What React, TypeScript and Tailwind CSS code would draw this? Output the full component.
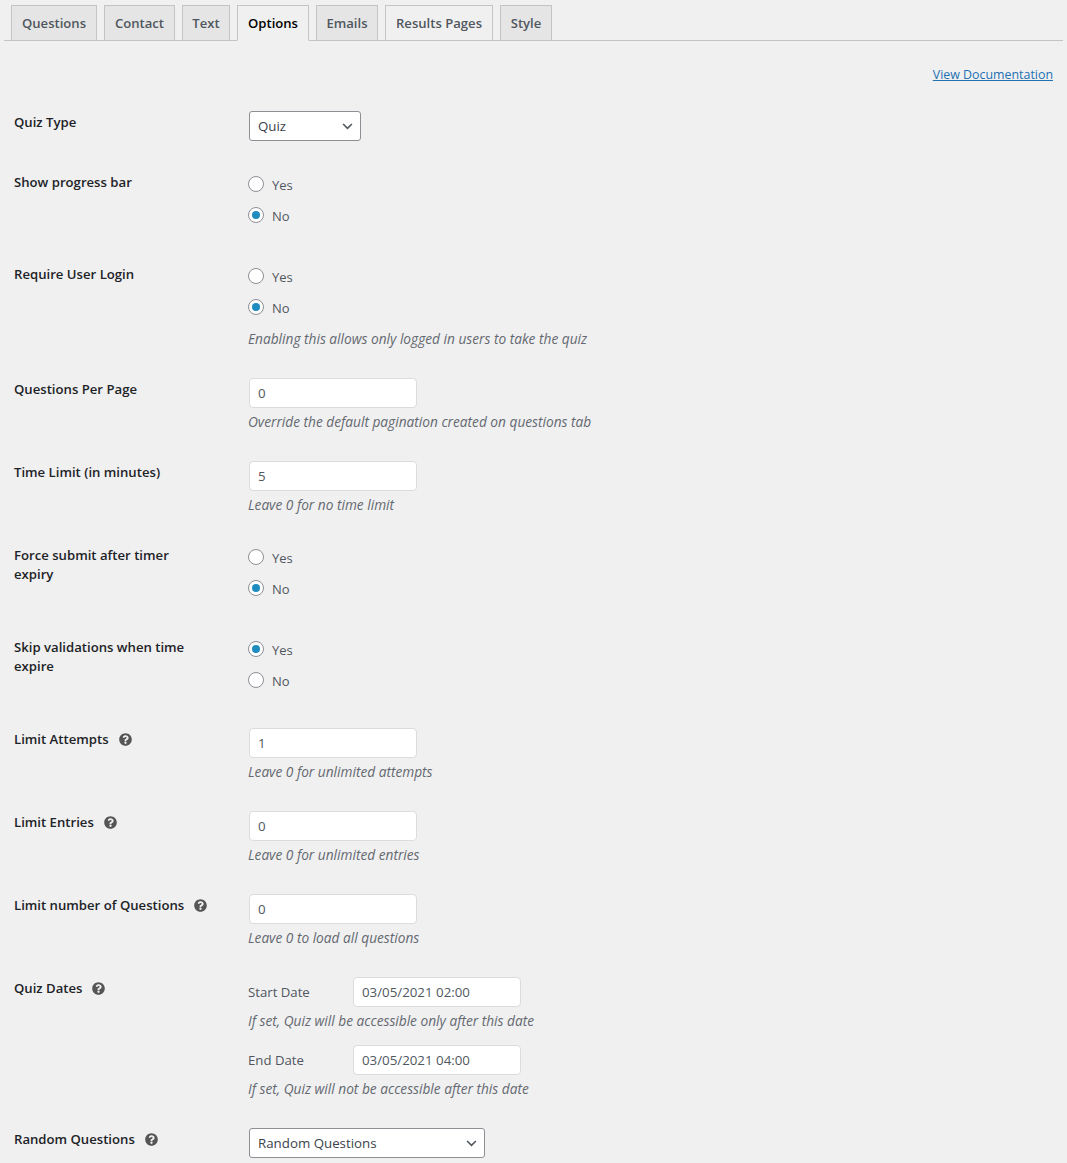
import { FaQuestionCircle } from "react-icons/fa";

const tabs = [
  { name: "Questions", width: "w-[86px]" },
  { name: "Contact", width: "w-[71px]" },
  { name: "Text", width: "w-[48px]" },
  { name: "Options", width: "w-[72px]" },
  { name: "Emails", width: "w-[62px]" },
  { name: "Results Pages", width: "w-[108px]" },
  { name: "Style", width: "w-[52px]" },
];

const Label = ({ children, help, radio }: { children: React.ReactNode; help?: boolean; radio?: boolean }) => (
  <div
    className={`w-[234px] shrink-0 pr-[40px] text-[13.15px] leading-[19px] font-semibold text-[#1d2327] ${radio ? "pt-[3px]" : "pt-[2px]"} ${
      help ? "whitespace-nowrap" : ""
    }`}
  >
    {children}
    {help && <FaQuestionCircle className="inline-block ml-[10px] -mt-[2px] text-[13px] text-[#555555]" />}
  </div>
);

const Desc = ({ children }: { children: React.ReactNode }) => (
  <p className="h-5 leading-5 text-[13.7px] italic text-[#646970]">{children}</p>
);

const TextInput = ({ value, className = "ml-px" }: { value: string; className?: string }) => (
  <input
    readOnly
    value={value}
    className={`block w-[168px] h-[30px] px-2 bg-white border border-[#dcdcde] rounded-[4px] text-[13.3px] text-[#50575e] outline-none ${className}`}
  />
);

const Select = ({ value, width }: { value: string; width: string }) => (
  <div className={`relative ml-px h-[30px] ${width}`}>
    <select className="block w-full h-full pl-2 pr-6 pt-[2px] appearance-none bg-white border border-[#8c8f94] rounded-[3px] text-[13.3px] text-[#3c434a] outline-none">
      <option>{value}</option>
    </select>
    <svg className="absolute right-[8px] top-[12px] w-[11px] h-[7px] pointer-events-none" viewBox="0 0 12 8" fill="none" stroke="#50575e" strokeWidth="1.8">
      <path d="M1 1.2l5 5 5-5" />
    </svg>
  </div>
);

const Radios = ({ name, value }: { name: string; value: "Yes" | "No" }) => (
  <div>
    {["Yes", "No"].map((opt) => (
      <label key={opt} className="flex items-center h-[31px] text-[13px] text-[#50575e]">
        <input
          type="radio"
          name={name}
          readOnly
          checked={opt === value}
          className="appearance-none block w-4 h-4 mr-2 mb-[3px] rounded-full bg-white border border-[#8c8f94] before:block before:w-2 before:h-2 before:m-[3px] before:rounded-full checked:before:bg-[#1e8cbe]"
        />
        <span className="pt-px">{opt}</span>
      </label>
    ))}
  </div>
);

const Row = ({ label, help, radio, children }: { label: React.ReactNode; help?: boolean; radio?: boolean; children: React.ReactNode }) => (
  <div className="flex">
    <Label help={help} radio={radio}>{label}</Label>
    <div className="flex-1">{children}</div>
  </div>
);

const DateField = ({ label, value, note }: { label: string; value: string; note: string }) => (
  <div>
    <div className="flex items-center">
      <span className="w-[105px] pt-px text-[13.2px] text-[#50575e]">{label}</span>
      <TextInput value={value} className="" />
    </div>
    <div className="mt-1">
      <Desc>{note}</Desc>
    </div>
  </div>
);

export default function App() {
  return (
    <div className="h-[1163px] overflow-hidden bg-[#f0f0f1] pt-[5px] px-[4px] font-['Open_Sans',sans-serif]">
      <div className="flex pl-[7px] h-[36px] w-[1059px] border-b border-[#c3c4c7]">
        {tabs.map((tab) => (
          <div
            key={tab.name}
            className={`h-[36px] pt-px mr-[7px] flex items-center justify-center border border-[#c3c4c7] text-[13.1px] font-semibold ${tab.width} ${
              tab.name === "Options"
                ? "bg-[#f0f0f1] border-b-[#f0f0f1] text-black"
                : tab.name === "Results Pages"
                  ? "bg-[#f0f0f1] text-[#50575e]"
                  : "bg-[#e5e5e5] text-[#50575e]"
            }`}
          >
            {tab.name}
          </div>
        ))}
      </div>

      <div className="flex justify-end w-[1049px] mt-[24px] h-5 leading-5">
        <a href="#" className="text-[12.4px] text-[#2271b1] underline">View Documentation</a>
      </div>

      <div className="mt-[26px] pl-[10px] flex flex-col gap-[29px]">
        <Row label="Quiz Type">
          <Select value="Quiz" width="w-[112px]" />
        </Row>
        <Row label="Show progress bar" radio>
          <Radios name="progress" value="No" />
          <div className="h-px" />
        </Row>
        <Row label="Require User Login" radio>
          <Radios name="login" value="No" />
          <div className="mt-[5px]">
            <Desc>Enabling this allows only logged in users to take the quiz</Desc>
          </div>
        </Row>
        <Row label="Questions Per Page">
          <TextInput value="0" />
          <div className="mt-1">
            <Desc>Override the default pagination created on questions tab</Desc>
          </div>
        </Row>
        <Row label="Time Limit (in minutes)">
          <TextInput value="5" />
          <div className="mt-1 -mb-px">
            <Desc>Leave 0 for no time limit</Desc>
          </div>
        </Row>
        <Row label="Force submit after timer expiry" radio>
          <Radios name="force" value="No" />
          <div className="h-px" />
        </Row>
        <Row label="Skip validations when time expire" radio>
          <Radios name="skip" value="Yes" />
          <div className="h-[2px]" />
        </Row>
        <Row label="Limit Attempts" help>
          <TextInput value="1" />
          <div className="mt-1">
            <Desc>Leave 0 for unlimited attempts</Desc>
          </div>
        </Row>
        <Row label="Limit Entries" help>
          <TextInput value="0" />
          <div className="mt-1">
            <Desc>Leave 0 for unlimited entries</Desc>
          </div>
        </Row>
        <Row label="Limit number of Questions" help>
          <TextInput value="0" />
          <div className="mt-1">
            <Desc>Leave 0 to load all questions</Desc>
          </div>
        </Row>
        <Row label="Quiz Dates" help>
          <div className="flex flex-col gap-[14px]">
            <DateField label="Start Date" value="03/05/2021 02:00" note="If set, Quiz will be accessible only after this date" />
            <DateField label="End Date" value="03/05/2021 04:00" note="If set, Quiz will not be accessible after this date" />
          </div>
        </Row>
        <Row label="Random Questions" help>
          <Select value="Random Questions" width="w-[236px]" />
        </Row>
      </div>
    </div>
  );
}
